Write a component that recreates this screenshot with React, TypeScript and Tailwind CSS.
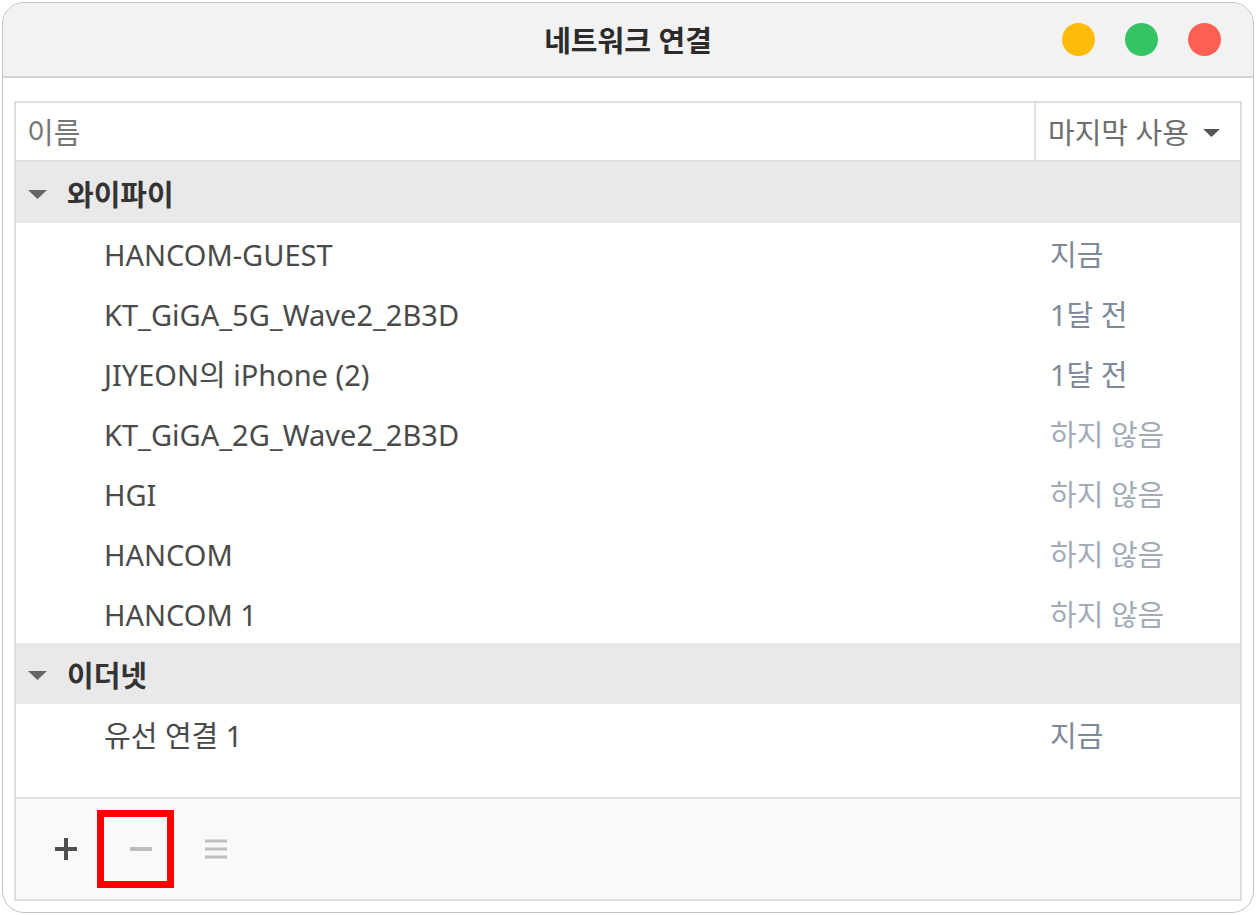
import React from 'react';

type Row = { name: string; when: string; never?: boolean };

const wifi: Row[] = [
  { name: 'HANCOM-GUEST', when: '지금' },
  { name: 'KT_GiGA_5G_Wave2_2B3D', when: '1달 전' },
  { name: 'JIYEON의 iPhone (2)', when: '1달 전' },
  { name: 'KT_GiGA_2G_Wave2_2B3D', when: '하지 않음', never: true },
  { name: 'HGI', when: '하지 않음', never: true },
  { name: 'HANCOM', when: '하지 않음', never: true },
  { name: 'HANCOM 1', when: '하지 않음', never: true },
];

const ethernet: Row[] = [{ name: '유선 연결 1', when: '지금' }];

function Caret({ className }: { className?: string }) {
  return (
    <svg viewBox="0 0 19 9" className={className} fill="currentColor">
      <path d="M0 0h19L9.5 9z" />
    </svg>
  );
}

function Group({ label }: { label: string }) {
  return (
    <div className="h-[61px] bg-[#e9e9e9] flex items-center pl-[12px] pt-[3px]">
      <Caret className="w-[19px] h-[9px] text-[#666]" />
      <span className="ml-[20px] font-bold text-[#333] leading-none">{label}</span>
    </div>
  );
}

function Item({ row }: { row: Row }) {
  return (
    <div className="h-[60px] flex items-center pt-[3px] leading-none">
      <span className="flex-1 pl-[88px] text-[#4a4a4a]">{row.name}</span>
      <span
        className={
          'w-[206px] pl-[16px] ' + (row.never ? 'text-[#a3acb6]' : 'text-[#7e8a99]')
        }
      >
        {row.when}
      </span>
    </div>
  );
}

export default function App() {
  return (
    <div
      className="w-[1256px] h-[915px] bg-white p-[2px] text-[29px]"
      style={{ fontFamily: '"Noto Sans", "Noto Sans CJK KR", sans-serif' }}
    >
      <div className="w-[1252px] h-[911px] border border-[#c2c2c2] rounded-[22px] overflow-hidden flex flex-col bg-white">
        {/* Title bar */}
        <div className="h-[75px] shrink-0 bg-[#f2f2f2] border-b-2 border-[#d6d6d6] grid grid-cols-[1fr_auto_1fr] items-center">
          <div />
          <h1 className="font-bold text-[29px] leading-none text-[#2b2b2b] pt-[2px]">네트워크 연결</h1>
          <div className="flex justify-end gap-[30px] pr-[32px]">
            <span className="w-[33px] h-[33px] rounded-full bg-[#fdbc0a]" />
            <span className="w-[33px] h-[33px] rounded-full bg-[#35c464]" />
            <span className="w-[33px] h-[33px] rounded-full bg-[#ff5f52]" />
          </div>
        </div>

        {/* Content */}
        <div className="flex-1 px-[11px] pt-[23px] pb-[11px] flex">
          <div className="flex-1 border-2 border-[#dedede] flex flex-col">
            <div className="h-[59px] border-b-2 border-[#e0e0e0] flex items-stretch leading-none">
              <div className="flex-1 flex items-center pl-[11px] pt-[2px] text-[#777]">이름</div>
              <div className="w-[206px] border-l-2 border-[#e3e3e3] flex items-center pl-[12px] pt-[2px]">
                <span className="text-[#6f6f6f]">마지막 사용</span>
                <Caret className="w-[19px] h-[8px] ml-[13px] text-[#555]" />
              </div>
            </div>

            <div className="flex-1">
              <Group label="와이파이" />
              {wifi.map((r) => (
                <Item key={r.name} row={r} />
              ))}
              <Group label="이더넷" />
              {ethernet.map((r) => (
                <Item key={r.name} row={r} />
              ))}
            </div>

            {/* Footer toolbar */}
            <div className="h-[102px] border-t-2 border-[#e0e0e0] bg-[#f9f9f9] flex items-center pl-[39px]">
              <svg viewBox="0 0 22 22" className="w-[22px] h-[22px] text-[#4f4f4f]">
                <path d="M11 0v22M0 11h22" stroke="currentColor" strokeWidth="4" />
              </svg>
              <div className="ml-[20px] w-[77px] h-[78px] border-[7px] border-[#ff0000] flex items-center pl-[26px]">
                <svg viewBox="0 0 22 4" className="w-[22px] h-[4px] text-[#bdbdbd]">
                  <path d="M0 2h22" stroke="currentColor" strokeWidth="4" />
                </svg>
              </div>
              <svg viewBox="0 0 22 20" className="ml-[31px] w-[22px] h-[20px] text-[#bdbdbd]">
                <path d="M0 2h22M0 10h22M0 18h22" stroke="currentColor" strokeWidth="3" />
              </svg>
            </div>
          </div>
        </div>
      </div>
    </div>
  );
}
